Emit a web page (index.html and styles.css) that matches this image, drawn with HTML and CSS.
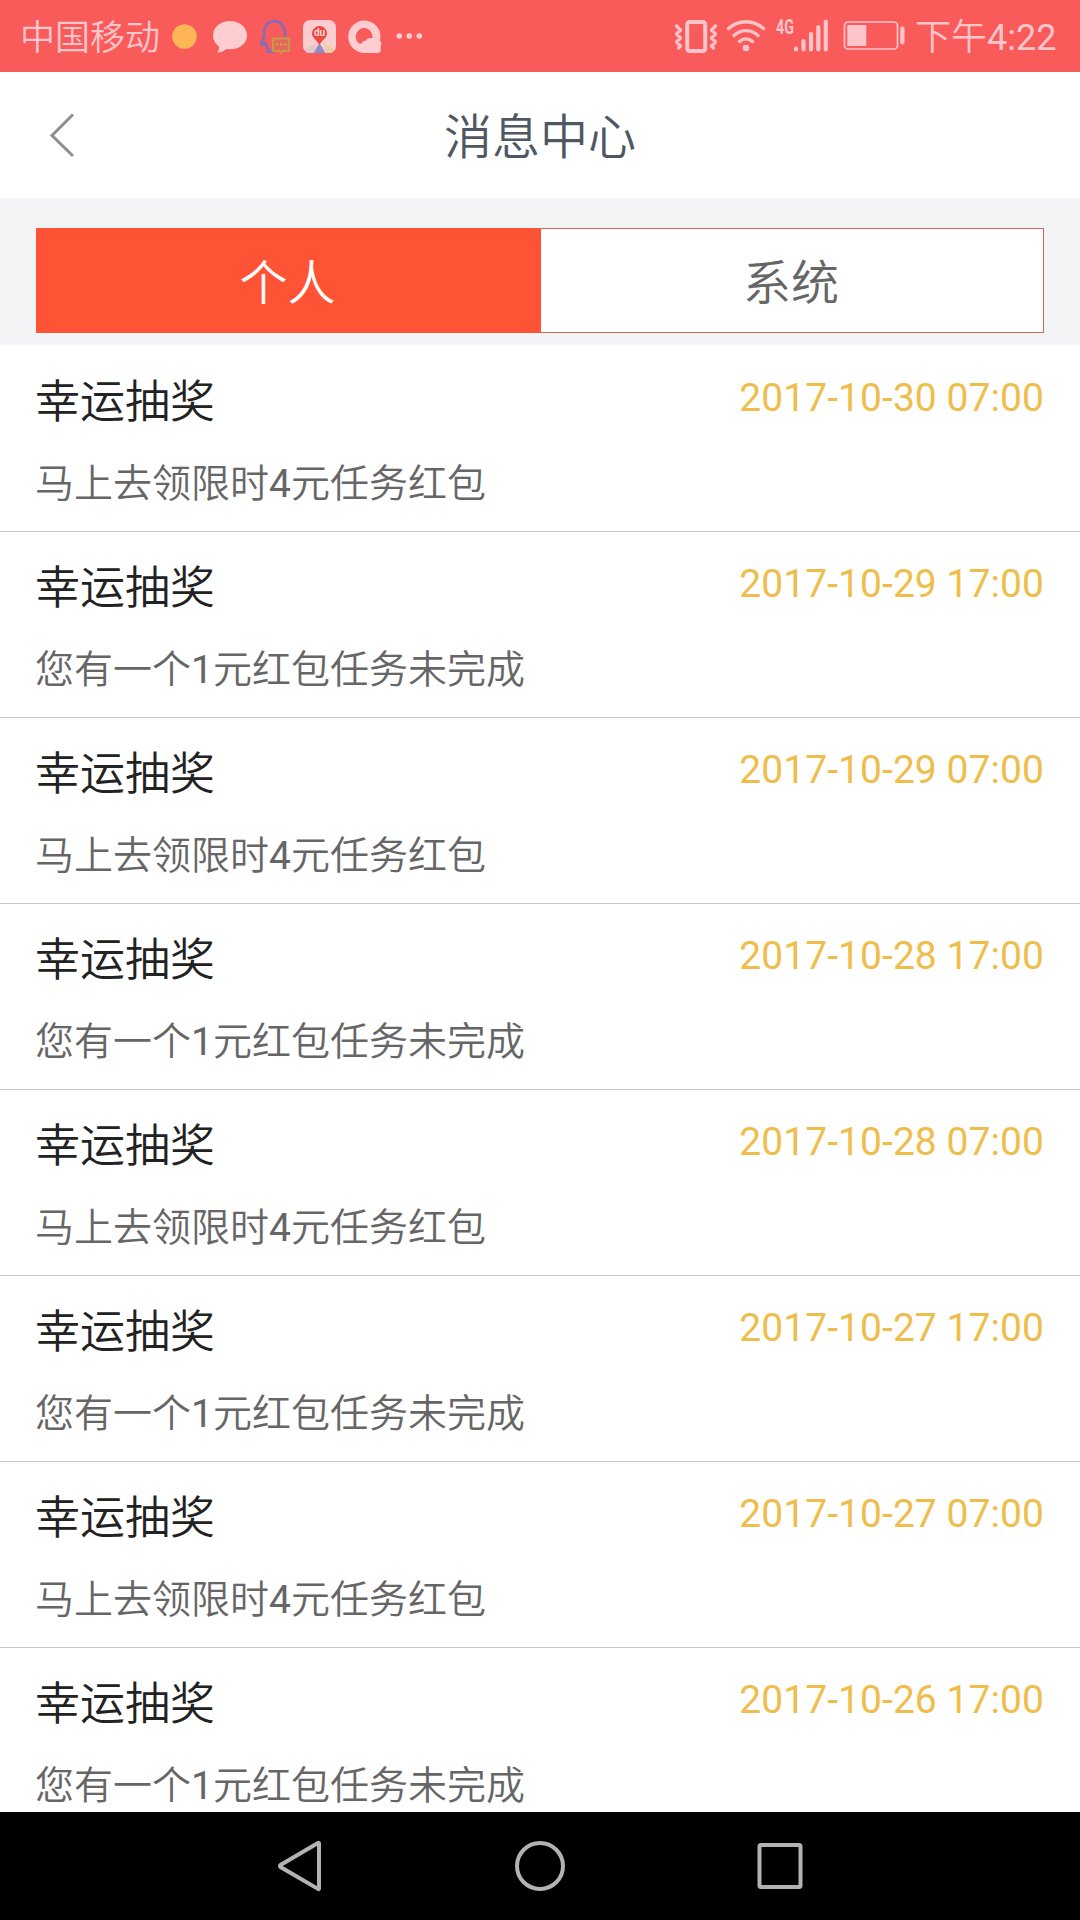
FILE: index.html
```html
<!DOCTYPE html>
<html lang="zh-CN">
<head>
<meta charset="utf-8">
<title>消息中心</title>
<link rel="stylesheet" href="styles.css">
</head>
<body>
<div class="status">
  <span class="carrier">中国移动</span>
  <svg class="status-left" width="255" height="72" viewBox="170 0 255 72">
    <circle cx="184.500" cy="36.500" r="12.300" fill="#ffb657"/>
    <path d="M230 21c-10 0-17 6.500-17 14.500 0 4.500 2.200 8.200 5.800 10.800.8 2.200-.2 4.600-1.800 6.200 4 .2 7-1.500 9.500-3.500l3.500.3c10 0 17-6 17-13.800S240 21 230 21z" fill="#fdcdcf"/>
    <path d="M285 37v-4c-.5-7-4.500-12-10.500-12S264 25.500 264 33v4c-2 3-3 6-2.500 8.500l4-3c0 3 1.500 5 3.500 6.500-1.500 1-2 2.500-.5 2.800h5" fill="none" stroke="#806ebd" stroke-width="2.400" stroke-linejoin="round" stroke-linecap="round"/>
    <path d="M273 38.500h16v12.300h-6l-2 2-2-2h-6z" fill="#e5675a" stroke="#c9994b" stroke-width="2.200"/>
    <path d="M275.500 44.500h2.200m2.200 0h2.200m2.200 0h2.200" stroke="#d6a548" stroke-width="2.200"/>
    <rect x="303" y="20" width="33" height="33" rx="7" fill="#fdcdcf"/>
    <path d="M305 49.500l12-7-3 10.500h-5q-3 0-4-3.500z" fill="#dfc7c5"/>
    <path d="M334 49.500l-11-8 3 11.500h4q3 0 4-3.500z" fill="#e7d0a5"/>
    <path d="M319.500 43l6 10h-12z" fill="#8f8bca"/>
    <path d="M319.500 26a7.500 7.500 0 0 0-7.500 7.500c0 4.500 5 6.500 7.500 11.500 2.500-5 7.500-7 7.500-11.500a7.500 7.500 0 0 0-7.500-7.500z" fill="#ed4742"/>
    <text class="pin-label" x="319.500" y="36">du</text>
    <path d="M364.500 20.500a16 16 0 0 1 15.500 20c2 2 1.500 4 .8 5.500v4q0 3-3 3h-13.300a16.200 16.200 0 0 1 0-32.500zm0 7.500a8.800 8.800 0 0 0-7 14q1.500 2 4 1.800c.5-2 2-3 4-3 1-2.500 4-3.500 7-2.500.5-5-3-10.300-8-10.300z" fill="#fdcdcf" fill-rule="evenodd"/>
    <g fill="#fdcdcf"><circle cx="399.300" cy="36" r="2.800"/><circle cx="409.300" cy="36" r="2.800"/><circle cx="419.300" cy="36" r="2.800"/></g>
  </svg>
  <svg class="status-right" width="243" height="72" viewBox="672 0 243 72">
    <g fill="none" stroke="#ffc5ca">
      <rect x="687.200" y="22" width="18" height="29" rx="2.500" stroke-width="4"/>
      <path d="M676.500 26l4 4-4 4 4 4-4 4 4 4-2 2M715.500 26l-4 4 4 4-4 4 4 4-4 4 2 2" stroke-width="3.200" stroke-linejoin="round" stroke-linecap="round"/>
      <path d="M728.500 28.500c10.500-9 24.500-9 35 0M734 35.500c7.500-6.500 16.500-6.500 24 0M739.500 41.500c4-3.500 9-3.500 13 0" stroke-width="3.400" stroke-linecap="round"/>
      <path d="M796 48.500v1M803.500 41v8.500M811 34v15.500M818.300 27v22.500M825.800 21.500v28" stroke-width="4.200" stroke-linecap="round"/>
      <rect x="844.500" y="22" width="53" height="27" rx="3.500" stroke-width="1.700"/>
    </g>
    <circle cx="746" cy="48" r="3.300" fill="#ffc5ca"/>
    <rect x="847.300" y="25" width="19" height="21" fill="#ffc5ca"/>
    <rect x="900.300" y="26.500" width="4.200" height="18" rx="2" fill="#ffc5ca"/>
    <text class="net-label" x="776" y="33.500" textLength="18" lengthAdjust="spacingAndGlyphs">4G</text>
  </svg>
  <span class="clock">下午<span class="clock-digits">4:22</span></span>
</div>
<header class="header">
  <svg class="back" width="30" height="50" viewBox="0 0 30 50"><path d="M26 4.500L5 25.500l21 20.500" fill="none" stroke="#8f8f8f" stroke-width="3"/></svg>
  <h1 class="heading">消息中心</h1>
</header>
<nav class="tabs">
  <div class="tab tab-active">个人</div>
  <div class="tab">系统</div>
</nav>
<main class="list">
  <article class="item"><h2 class="title">幸运抽奖</h2><time class="date">2017-10-30 07:00</time><p class="desc">马上去领限时<span class="num">4</span>元任务红包</p></article>
  <article class="item"><h2 class="title">幸运抽奖</h2><time class="date">2017-10-29 17:00</time><p class="desc">您有一个<span class="num">1</span>元红包任务未完成</p></article>
  <article class="item"><h2 class="title">幸运抽奖</h2><time class="date">2017-10-29 07:00</time><p class="desc">马上去领限时<span class="num">4</span>元任务红包</p></article>
  <article class="item"><h2 class="title">幸运抽奖</h2><time class="date">2017-10-28 17:00</time><p class="desc">您有一个<span class="num">1</span>元红包任务未完成</p></article>
  <article class="item"><h2 class="title">幸运抽奖</h2><time class="date">2017-10-28 07:00</time><p class="desc">马上去领限时<span class="num">4</span>元任务红包</p></article>
  <article class="item"><h2 class="title">幸运抽奖</h2><time class="date">2017-10-27 17:00</time><p class="desc">您有一个<span class="num">1</span>元红包任务未完成</p></article>
  <article class="item"><h2 class="title">幸运抽奖</h2><time class="date">2017-10-27 07:00</time><p class="desc">马上去领限时<span class="num">4</span>元任务红包</p></article>
  <article class="item"><h2 class="title">幸运抽奖</h2><time class="date">2017-10-26 17:00</time><p class="desc">您有一个<span class="num">1</span>元红包任务未完成</p></article>
</main>
<footer class="navbar">
  <svg width="56" height="60" viewBox="0 0 56 60"><path d="M47 7.500v45q0 1-1 .4L8.500 31q-1.200-1 0-2L46 7.100q1-.6 1 .4z"/></svg>
  <svg width="56" height="60" viewBox="0 0 56 60"><circle cx="28" cy="30" r="23"/></svg>
  <svg width="56" height="60" viewBox="0 0 56 60"><rect x="7.500" y="9" width="41" height="42" rx="1.500"/></svg>
</footer>
</body>
</html>
```
FILE: styles.css
```css
* { box-sizing: border-box; margin: 0; padding: 0; }
body {
  width: 1080px;
  height: 1920px;
  overflow: hidden;
  display: flex;
  flex-direction: column;
  background: #fff;
  font-family: Roboto, "Noto Sans CJK SC", sans-serif;
  font-weight: 350;
}
svg { display: block; flex: none; }

.status {
  flex: none;
  height: 72px;
  display: flex;
  align-items: center;
  padding: 0 24px 0 20px;
  background: #f95b5b;
  color: #ffc5ca;
  font-size: 35px;
  white-space: nowrap;
}
.carrier { width: 150px; line-height: 66px; padding-top: 6px; }
.status-right { margin-left: auto; }
.clock { width: 141px; font-size: 36px; line-height: 68px; padding-top: 4px; }
.clock-digits { font-weight: 400; }
.pin-label { font-size: 10px; font-weight: 700; fill: #fdd9da; text-anchor: middle; }
.net-label { font-size: 20px; font-weight: 700; fill: #ffc5ca; }

.header {
  flex: none;
  height: 126px;
  display: grid;
  grid-template-columns: 120px 1fr 120px;
  align-items: center;
}
.back { margin-left: 47px; }
.heading {
  padding-top: 5px;
  color: #4d5863;
  font-size: 48px;
  font-weight: 350;
  line-height: 60px;
  text-align: center;
}

.tabs {
  flex: none;
  height: 147px;
  padding: 30px 36px 12px;
  display: flex;
  background: #f2f4f6;
}
.tab {
  flex: 1;
  padding-right: 2px;
  border: 1px solid #cf6755;
  border-left: 0;
  background: #fff;
  color: #666;
  font-size: 48px;
  line-height: 110px;
  text-align: center;
}
.tab-active { flex: 0 0 505px; background: #ff5335; border: 0; color: #fff; line-height: 112px; }

.list { flex: 1; min-height: 0; overflow: hidden; padding-top: 1px; }
.item {
  height: 186px;
  padding: 29px 36px 0 35px;
  display: grid;
  grid-template-columns: 1fr auto;
  grid-template-rows: 86px 46px;
  border-bottom: 1px solid #c8c8c8;
}
.title { color: #222; font-size: 45px; font-weight: 350; line-height: 56px; }
.date { color: #efbd4b; font-size: 39px; font-weight: 400; line-height: 46px; letter-spacing: .06px; }
.desc { color: #666; font-size: 39px; line-height: 46px; }
.num { font-weight: 400; }

.navbar {
  flex: none;
  height: 108px;
  padding: 0 272px;
  display: flex;
  justify-content: space-between;
  align-items: center;
  background: #000;
}
.navbar svg { fill: none; stroke: #b3b3b3; stroke-width: 4; }
```
